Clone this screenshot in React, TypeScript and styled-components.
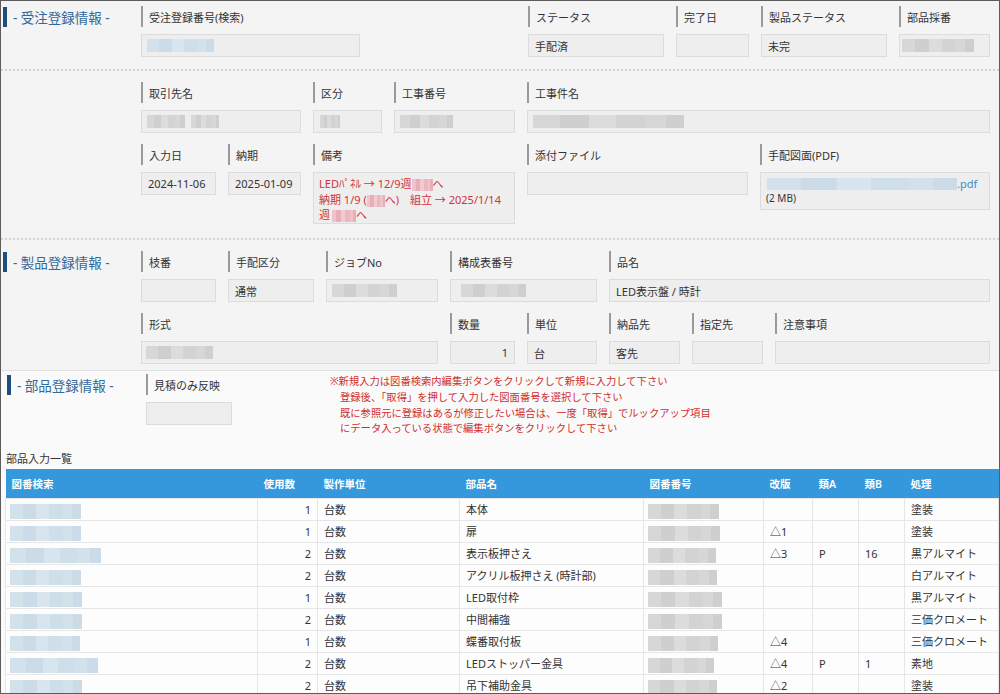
import React from "react";
import styled, { createGlobalStyle } from "styled-components";

const GlobalStyle = createGlobalStyle`
  html, body { margin: 0; padding: 0; background: #f4f4f4; }
  body { font-family: "Noto Sans", "Noto Sans CJK JP", sans-serif; }
`;

type Tone = "blue" | "gray" | "pink";

const tones: Record<Tone, string[]> = {
  blue: ["#d3e1eb", "#cbdce8", "#d9e5ee", "#cfdfea"],
  gray: ["#d7d7d7", "#cfcfcf", "#dcdcdc", "#d3d3d3"],
  pink: ["#efc3c9", "#e6aeb7", "#f0ccd1", "#eab9c0"],
};

const Frame = styled.div`
  width: 1000px;
  height: 694px;
  box-sizing: border-box;
  overflow: hidden;
  border: 1px solid #5c5c5c;
  background: #f4f4f4;
  color: #333;
  font-size: 11px;
`;

const Section = styled.section<{ $top: number; $bottom: number; $solid?: boolean }>`
  display: flex;
  padding: ${(p) => p.$top}px 9px ${(p) => p.$bottom}px 0;
  border-bottom: ${(p) => (p.$solid ? "1px solid #e0e0e0" : "2px dotted #d3d3d3")};
`;

const TitleCol = styled.div<{ $w?: number }>`
  flex: none;
  width: ${(p) => p.$w ?? 140}px;
`;

const Title = styled.h2`
  margin: 0;
  height: 21px;
  display: flex;
  align-items: center;
  font-size: 13.5px;
  font-weight: normal;
  color: #33689a;
  white-space: nowrap;

  &::before {
    content: "";
    width: 4px;
    height: 20px;
    margin: 0 6px 0 2px;
    background: #1d4e7d;
  }
`;

const Rows = styled.div`
  flex: 1;
  display: flex;
  flex-direction: column;
  gap: 11px;
`;

const Row = styled.div`
  display: flex;
  align-items: flex-start;
  gap: 12px;
`;

const Spacer = styled.div`
  flex: 1;
`;

const Field = styled.div<{ $w?: number }>`
  ${(p) => (p.$w ? `flex: none; width: ${p.$w}px;` : "flex: 1; min-width: 0;")}
  display: flex;
  flex-direction: column;
  gap: 7px;
`;

const Label = styled.div`
  height: 21px;
  display: flex;
  align-items: center;
  padding-left: 6px;
  border-left: 2px solid #9a9a9a;
  white-space: nowrap;
`;

const Box = styled.div<{ $h?: number; $multi?: boolean; $right?: boolean }>`
  box-sizing: border-box;
  height: ${(p) => p.$h ?? 23}px;
  padding: ${(p) => (p.$multi ? "3px 5px 0" : "0 6px")};
  display: flex;
  flex-direction: ${(p) => (p.$multi ? "column" : "row")};
  align-items: ${(p) => (p.$multi ? "flex-start" : "center")};
  justify-content: ${(p) => (p.$right ? "flex-end" : "flex-start")};
  background: #eeeeee;
  border: 1px solid #dcdcdc;
  white-space: nowrap;
  overflow: hidden;
`;

const Blur = styled.span<{ $w: number; $h?: number; $tone: Tone; $ml?: number }>`
  display: inline-block;
  vertical-align: middle;
  flex: none;
  width: ${(p) => p.$w}px;
  height: ${(p) => p.$h ?? 13}px;
  margin-left: ${(p) => p.$ml ?? 0}px;
  background: ${(p) => {
    const c = tones[p.$tone];
    return `linear-gradient(90deg, ${c[0]} 0 18%, ${c[1]} 18% 37%, ${c[2]} 37% 55%, ${c[3]} 55% 74%, ${c[0]} 74% 88%, ${c[1]} 88%)`;
  }};
`;

const RedText = styled.div`
  color: #cf3434;
  line-height: 15.5px;
`;

const Link = styled.div`
  display: flex;
  align-items: center;
  color: #3a8cc6;
  line-height: 15px;
`;

const Small = styled.div`
  font-size: 10px;
  line-height: 15px;
`;

const PartsSection = styled.section`
  padding: 3px 0 0 4px;
  background: #fafafa;
  height: 100%;
`;

const PartsTop = styled.div`
  display: flex;
  align-items: flex-start;
`;

const Notes = styled.div`
  margin-left: 98px;
  color: #d0302c;
  font-size: 10.3px;
  line-height: 15.75px;
`;

const NoteLine = styled.div<{ $indent?: boolean }>`
  padding-left: ${(p) => (p.$indent ? 10 : 0)}px;
  white-space: nowrap;
`;

const Caption = styled.div`
  margin: 15px 0 3px 1px;
  line-height: 14px;
`;

const Table = styled.table`
  width: 993px;
  border-collapse: collapse;
  table-layout: fixed;
  font-size: 11px;
`;

const Th = styled.th`
  height: 29px;
  padding: 0 6px;
  background: #3598dc;
  color: #fff;
  font-size: 10.5px;
  font-weight: 600;
  text-align: left;
  white-space: nowrap;
`;

const Td = styled.td<{ $right?: boolean; $tight?: boolean }>`
  height: 21px;
  padding: ${(p) => (p.$tight ? "0 4px" : "0 6px")};
  border: 1px solid #e6e6e6;
  background: #fdfdfd;
  text-align: ${(p) => (p.$right ? "right" : "left")};
  white-space: nowrap;
  overflow: hidden;
  line-height: 21px;
`;

const columns = [
  { title: "図番検索", w: 252 },
  { title: "使用数", w: 60 },
  { title: "製作単位", w: 142 },
  { title: "部品名", w: 184 },
  { title: "図番番号", w: 120 },
  { title: "改版", w: 49 },
  { title: "類A", w: 46 },
  { title: "類B", w: 46 },
  { title: "処理", w: 94 },
];

type Part = {
  searchW: number;
  qty: number;
  name: string;
  drawW: number;
  rev?: string;
  a?: string;
  b?: string;
  proc: string;
};

const parts: Part[] = [
  { searchW: 71, qty: 1, name: "本体", drawW: 71, proc: "塗装" },
  { searchW: 71, qty: 1, name: "扉", drawW: 72, rev: "△1", proc: "塗装" },
  { searchW: 91, qty: 2, name: "表示板押さえ", drawW: 68, rev: "△3", a: "P", b: "16", proc: "黒アルマイト" },
  { searchW: 71, qty: 2, name: "アクリル板押さえ (時計部)", drawW: 69, proc: "白アルマイト" },
  { searchW: 72, qty: 1, name: "LED取付枠", drawW: 74, proc: "黒アルマイト" },
  { searchW: 72, qty: 2, name: "中間補強", drawW: 74, proc: "三価クロメート" },
  { searchW: 70, qty: 1, name: "蝶番取付板", drawW: 70, rev: "△4", proc: "三価クロメート" },
  { searchW: 88, qty: 2, name: "LEDストッパー金具", drawW: 66, rev: "△4", a: "P", b: "1", proc: "素地" },
  { searchW: 72, qty: 2, name: "吊下補助金具", drawW: 69, rev: "△2", proc: "塗装" },
];

export default function App() {
  return (
    <>
      <GlobalStyle />
      <Frame>
        <Section $top={5} $bottom={12}>
          <TitleCol>
            <Title>- 受注登録情報 -</Title>
          </TitleCol>
          <Rows>
            <Row>
              <Field $w={219}>
                <Label>受注登録番号(検索)</Label>
                <Box>
                  <Blur $w={67} $tone="blue" $ml={-1} />
                </Box>
              </Field>
              <Spacer />
              <Field $w={136}>
                <Label>ステータス</Label>
                <Box>手配済</Box>
              </Field>
              <Field $w={73}>
                <Label>完了日</Label>
                <Box />
              </Field>
              <Field $w={126}>
                <Label>製品ステータス</Label>
                <Box>未完</Box>
              </Field>
              <Field $w={91}>
                <Label>部品採番</Label>
                <Box>
                  <Blur $w={72} $tone="gray" $ml={-4} />
                </Box>
              </Field>
            </Row>
          </Rows>
        </Section>

        <Section $top={11} $bottom={14}>
          <TitleCol />
          <Rows>
            <Row>
              <Field $w={160}>
                <Label>取引先名</Label>
                <Box>
                  <Blur $w={38} $tone="gray" $ml={-1} />
                  <Blur $w={28} $tone="gray" $ml={6} />
                </Box>
              </Field>
              <Field $w={69}>
                <Label>区分</Label>
                <Box>
                  <Blur $w={20} $tone="gray" />
                </Box>
              </Field>
              <Field $w={121}>
                <Label>工事番号</Label>
                <Box>
                  <Blur $w={53} $tone="gray" $ml={-1} />
                </Box>
              </Field>
              <Field>
                <Label>工事件名</Label>
                <Box>
                  <Blur $w={151} $tone="gray" $ml={-1} />
                </Box>
              </Field>
            </Row>
            <Row>
              <Field $w={75}>
                <Label>入力日</Label>
                <Box>2024-11-06</Box>
              </Field>
              <Field $w={73}>
                <Label>納期</Label>
                <Box>2025-01-09</Box>
              </Field>
              <Field $w={202}>
                <Label>備考</Label>
                <Box $h={52} $multi>
                  <RedText>
                    LEDﾊﾟﾈﾙ → 12/9週<Blur $w={21} $h={12} $tone="pink" />へ
                  </RedText>
                  <RedText>
                    納期 1/9 (<Blur $w={18} $h={12} $tone="pink" />へ)　組立 → 2025/1/14
                  </RedText>
                  <RedText>
                    週<Blur $w={24} $h={12} $tone="pink" $ml={2} />へ
                  </RedText>
                </Box>
              </Field>
              <Field $w={221}>
                <Label>添付ファイル</Label>
                <Box />
              </Field>
              <Field>
                <Label>手配図面(PDF)</Label>
                <Box $h={38} $multi>
                  <Link>
                    <Blur $w={190} $h={12} $tone="blue" $ml={1} />
                    .pdf
                  </Link>
                  <Small>(2 MB)</Small>
                </Box>
              </Field>
            </Row>
          </Rows>
        </Section>

        <Section $top={11} $bottom={6} $solid>
          <TitleCol>
            <Title>- 製品登録情報 -</Title>
          </TitleCol>
          <Rows>
            <Row>
              <Field $w={75}>
                <Label>枝番</Label>
                <Box />
              </Field>
              <Field $w={86}>
                <Label>手配区分</Label>
                <Box>通常</Box>
              </Field>
              <Field $w={112}>
                <Label>ジョブNo</Label>
                <Box>
                  <Blur $w={65} $tone="gray" $ml={-1} />
                </Box>
              </Field>
              <Field $w={147}>
                <Label>構成表番号</Label>
                <Box>
                  <Blur $w={65} $tone="gray" $ml={4} />
                </Box>
              </Field>
              <Field>
                <Label>品名</Label>
                <Box>LED表示盤 / 時計</Box>
              </Field>
            </Row>
            <Row>
              <Field $w={297}>
                <Label>形式</Label>
                <Box>
                  <Blur $w={67} $tone="gray" $ml={-2} />
                </Box>
              </Field>
              <Field $w={65}>
                <Label>数量</Label>
                <Box $right>1</Box>
              </Field>
              <Field $w={70}>
                <Label>単位</Label>
                <Box>台</Box>
              </Field>
              <Field $w={71}>
                <Label>納品先</Label>
                <Box>客先</Box>
              </Field>
              <Field $w={71}>
                <Label>指定先</Label>
                <Box />
              </Field>
              <Field>
                <Label>注意事項</Label>
                <Box />
              </Field>
            </Row>
          </Rows>
        </Section>

        <PartsSection>
          <PartsTop>
            <TitleCol $w={141}>
              <Title>- 部品登録情報 -</Title>
            </TitleCol>
            <Field $w={86}>
              <Label>見積のみ反映</Label>
              <Box />
            </Field>
            <Notes>
              <NoteLine>※新規入力は図番検索内編集ボタンをクリックして新規に入力して下さい</NoteLine>
              <NoteLine $indent>登録後、「取得」を押して入力した図面番号を選択して下さい</NoteLine>
              <NoteLine $indent>既に参照元に登録はあるが修正したい場合は、一度「取得」でルックアップ項目</NoteLine>
              <NoteLine $indent>にデータ入っている状態で編集ボタンをクリックして下さい</NoteLine>
            </Notes>
          </PartsTop>
          <Caption>部品入力一覧</Caption>
          <Table>
            <colgroup>
              {columns.map((c) => (
                <col key={c.title} style={{ width: c.w }} />
              ))}
            </colgroup>
            <thead>
              <tr>
                {columns.map((c) => (
                  <Th key={c.title}>{c.title}</Th>
                ))}
              </tr>
            </thead>
            <tbody>
              {parts.map((p, i) => (
                <tr key={i}>
                  <Td $tight>
                    <Blur $w={p.searchW} $h={15} $tone="blue" />
                  </Td>
                  <Td $right>{p.qty}</Td>
                  <Td>台数</Td>
                  <Td>{p.name}</Td>
                  <Td $tight>
                    <Blur $w={p.drawW} $h={15} $tone="gray" />
                  </Td>
                  <Td>{p.rev}</Td>
                  <Td>{p.a}</Td>
                  <Td>{p.b}</Td>
                  <Td>{p.proc}</Td>
                </tr>
              ))}
            </tbody>
          </Table>
        </PartsSection>
      </Frame>
    </>
  );
}
